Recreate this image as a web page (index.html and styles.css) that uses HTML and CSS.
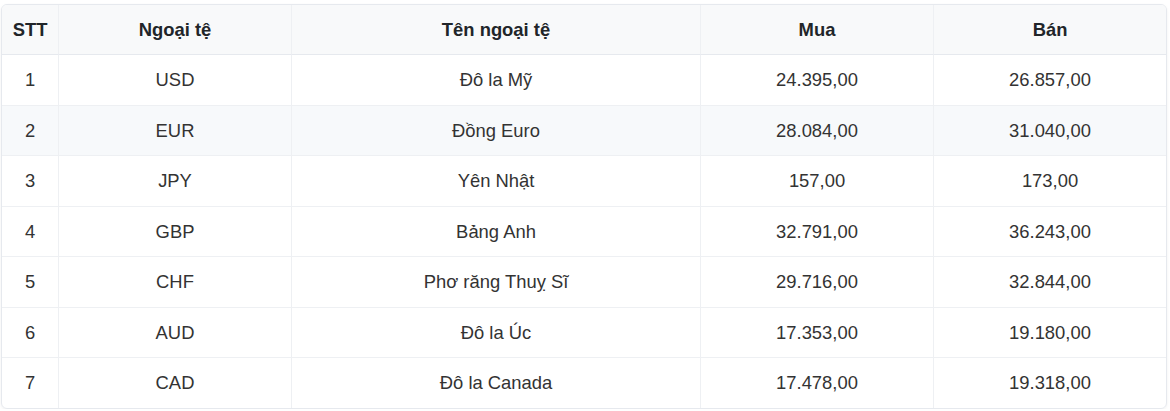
FILE: index.html
```html
<!DOCTYPE html>
<html lang="vi">
<head>
<meta charset="utf-8">
<title>Tỷ giá ngoại tệ</title>
<link rel="stylesheet" href="styles.css">
</head>
<body>
<div class="wrap">
<table class="rates">
<colgroup>
<col class="c-stt"><col class="c-code"><col class="c-name"><col class="c-buy"><col class="c-sell">
</colgroup>
<thead>
<tr><th>STT</th><th>Ngoại tệ</th><th>Tên ngoại tệ</th><th>Mua</th><th>Bán</th></tr>
</thead>
<tbody>
<tr><td>1</td><td>USD</td><td>Đô la Mỹ</td><td>24.395,00</td><td>26.857,00</td></tr>
<tr class="hl"><td>2</td><td>EUR</td><td>Đồng Euro</td><td>28.084,00</td><td>31.040,00</td></tr>
<tr><td>3</td><td>JPY</td><td>Yên Nhật</td><td>157,00</td><td>173,00</td></tr>
<tr><td>4</td><td>GBP</td><td>Bảng Anh</td><td>32.791,00</td><td>36.243,00</td></tr>
<tr><td>5</td><td>CHF</td><td>Phơ răng Thuỵ Sĩ</td><td>29.716,00</td><td>32.844,00</td></tr>
<tr><td>6</td><td>AUD</td><td>Đô la Úc</td><td>17.353,00</td><td>19.180,00</td></tr>
<tr><td>7</td><td>CAD</td><td>Đô la Canada</td><td>17.478,00</td><td>19.318,00</td></tr>
</tbody>
</table>
</div>
</body>
</html>
```
FILE: styles.css
```css
html, body {
  margin: 0;
  padding: 0;
  background: #ffffff;
}
.wrap {
  padding: 4px 3px 0 1px;
}
.rates {
  width: 1166px;
  border-collapse: separate;
  border-spacing: 0;
  border: 1px solid #e6e9ee;
  border-radius: 6px;
  overflow: hidden;
  box-shadow: 0 1px 3px rgba(0, 0, 0, 0.06);
  font-family: "Liberation Sans", Arial, sans-serif;
  font-size: 18.4px;
  color: #333333;
  table-layout: fixed;
}
.c-stt { width: 57px; }
.c-code { width: 233px; }
.c-name { width: 409px; }
.c-buy { width: 233px; }
.c-sell { width: auto; }
.rates th, .rates td {
  text-align: center;
  padding: 1px 0 0;
  height: 48.5px;
  border-right: 1px solid #eef0f3;
  border-bottom: 1px solid #eef0f3;
}
.rates th:last-child, .rates td:last-child {
  border-right: none;
}
.rates tbody tr:last-child td {
  border-bottom: none;
}
.rates th {
  height: 48px;
  background: #f8f9fa;
  font-weight: bold;
  color: #212529;
  border-bottom: 1px solid #e6e9ee;
}
.rates tr.hl td {
  background: #f7f9fb;
}
```
